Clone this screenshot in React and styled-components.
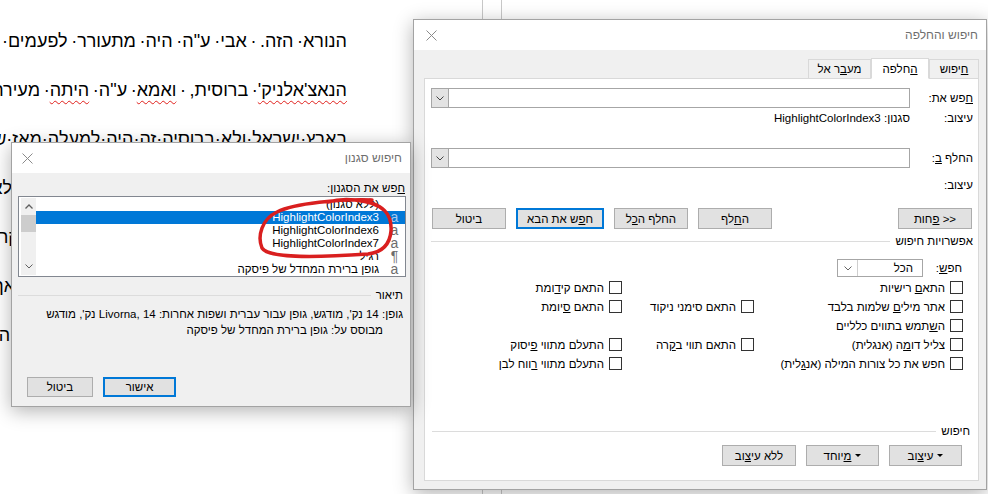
import React from 'react';
import styled, { createGlobalStyle } from 'styled-components';

const GlobalStyle = createGlobalStyle`
  html, body {
    margin: 0;
    padding: 0;
    background: #fff;
  }
  body {
    font-family: "Liberation Sans", "DejaVu Sans", sans-serif;
  }
`;

const Desktop = styled.div`
  position: relative;
  width: 988px;
  height: 494px;
  overflow: hidden;
  background: #fff;
`;

/* document behind the dialogs */
const Page = styled.div`
  display: flex;
  height: 100%;
`;

const DocText = styled.div`
  width: 347px;
  margin-top: -32px;
  direction: rtl;
  overflow: hidden;
  font-family: "Liberation Sans", Arial, sans-serif;
  font-size: 18px;
  line-height: 49px;
  color: #000;
`;

const DocLine = styled.div`
  white-space: nowrap;
`;

const Misspelled = styled.span`
  text-decoration: underline wavy #e0201c;
  text-decoration-thickness: 1px;
  text-underline-offset: 4px;
  text-decoration-skip-ink: none;
`;

const PageEdge = styled.div`
  width: 18px;
  margin-left: 135px;
  border-left: 1px solid #c8c8c8;
  border-right: 1px solid #c8c8c8;
`;

/* windows */
const Window = styled.div`
  position: absolute;
  left: ${p => p.$x}px;
  top: ${p => p.$y}px;
  width: ${p => p.$w}px;
  height: ${p => p.$h}px;
  box-sizing: border-box;
  display: flex;
  flex-direction: column;
  direction: rtl;
  background: #f0f0f0;
  border: 1px solid #a3a3a3;
  box-shadow: 0 4px 18px rgba(0, 0, 0, 0.3);
  font-family: "Liberation Sans", "DejaVu Sans", sans-serif;
  font-size: 11.5px;
  color: #000;
`;

const TitleBar = styled.div`
  height: 30px;
  flex-shrink: 0;
  display: flex;
  align-items: center;
  justify-content: space-between;
  padding: 0 8px 0 ${p => p.$closePad}px;
  background: #fff;
`;

const Title = styled.span`
  font-size: 12px;
  color: #6e6e6e;
`;

const U = styled.u`
  text-decoration: underline;
  text-underline-offset: 1px;
`;

const Button = styled.button`
  box-sizing: border-box;
  width: ${p => p.$w}px;
  height: ${p => p.$h || 21}px;
  padding: 0;
  font: inherit;
  color: #000;
  background: #e1e1e1;
  border: ${p => (p.$primary ? '2px solid #0078d7' : '1px solid #adadad')};
  display: inline-flex;
  align-items: center;
  justify-content: center;
  gap: 4px;
  white-space: nowrap;
`;

const Caret = styled.span`
  width: 0;
  height: 0;
  border-left: 3px solid transparent;
  border-right: 3px solid transparent;
  border-top: 3px solid #000;
`;

const SectionRule = styled.div`
  display: flex;
  align-items: center;
  gap: 5px;
  height: 12px;
  margin-top: ${p => p.$mt || 0}px;
  padding: 0 ${p => p.$pr}px 0 ${p => p.$pl}px;

  &::after {
    content: '';
    flex: 1;
    height: 1px;
    background: #dcdcdc;
  }
`;

/* find & replace dialog */
const FindBody = styled.div`
  flex: 1;
  min-height: 0;
  display: flex;
  flex-direction: column;
  padding: 8px 7px 8px 10px;
`;

const TabStrip = styled.div`
  display: flex;
  align-items: flex-end;
  height: 21px;
  margin-bottom: -1px;
  position: relative;
  z-index: 1;
`;

const Tab = styled.div`
  box-sizing: border-box;
  width: ${p => p.$w}px;
  height: ${p => (p.$active ? 21 : 20)}px;
  display: flex;
  align-items: center;
  justify-content: center;
  background: ${p => (p.$active ? '#fff' : '#f0f0f0')};
  border: 1px solid #d9d9d9;
  border-bottom-color: ${p => (p.$active ? '#fff' : '#d9d9d9')};
`;

const TabPanel = styled.div`
  flex: 1;
  display: flex;
  flex-direction: column;
  background: #fff;
  border: 1px solid #d9d9d9;
`;

const FieldRow = styled.div`
  display: grid;
  grid-template-columns: 63px 1fr;
  align-items: center;
  height: 20px;
  margin-top: ${p => p.$mt || 0}px;
  padding: 0 5px 0 6px;
`;

const Combo = styled.div`
  display: flex;
  box-sizing: border-box;
  width: ${p => (p.$w ? `${p.$w}px` : 'auto')};
  height: ${p => p.$h || 20}px;
  border: 1px solid #a6a6a6;
  background: #fff;
`;

const ComboField = styled.div`
  flex: 1;
  display: flex;
  align-items: center;
  padding-right: ${p => p.$pad || 0}px;
`;

const ComboButton = styled.div`
  width: ${p => p.$w || 16}px;
  display: flex;
  align-items: center;
  justify-content: center;
  background: ${p => (p.$light ? '#fff' : '#e3e3e3')};
  border-right: 1px solid ${p => (p.$light ? '#cfcfcf' : '#a6a6a6')};
`;

const ActionRow = styled.div`
  display: flex;
  justify-content: space-between;
  margin-top: 13px;
  padding: 0 6px 0 7px;
`;

const ButtonGroup = styled.div`
  display: flex;
  gap: 10px;
`;

const ScopeRow = styled.div`
  display: flex;
  align-items: center;
  height: 18px;
  margin-top: 12px;
  padding-right: 16px;
`;

const ScopeLabel = styled.span`
  width: 39px;
`;

const OptionsGrid = styled.div`
  display: grid;
  grid-template-columns: 209px 132px 1fr;
  grid-template-rows: repeat(5, 19px);
  margin-top: 1px;
  padding-right: 15px;
`;

const Option = styled.div`
  grid-row: ${p => p.$row};
  grid-column: ${p => p.$col};
  display: flex;
  align-items: center;
  gap: 5px;
  white-space: nowrap;
`;

const CheckBox = styled.span`
  width: 13px;
  height: 13px;
  flex-shrink: 0;
  box-sizing: border-box;
  border: 1px solid #333;
  background: #fff;
`;

const Footer = styled.div`
  margin-top: auto;
  padding-bottom: 14px;
`;

const FooterButtons = styled.div`
  display: flex;
  gap: 10px;
  margin-top: 8px;
  padding-right: 16px;
`;

/* style search dialog */
const StyleBody = styled.div`
  flex: 1;
  display: flex;
  flex-direction: column;
  padding: 8px 4px 9px 6px;
`;

const FieldLabel = styled.div`
  height: 14px;
  line-height: 14px;
  padding-right: 1px;
`;

const ListBox = styled.div`
  display: flex;
  height: 81px;
  box-sizing: border-box;
  margin-top: 1px;
  padding: 1px 0 1px 2px;
  border: 1px solid #828790;
  background: #fff;
`;

const ItemList = styled.div`
  flex: 1;
  display: flex;
  flex-direction: column;
  overflow: hidden;
`;

const Item = styled.div`
  display: flex;
  align-items: center;
  height: 13px;
  line-height: 13px;
  flex-shrink: 0;
  background: ${p => (p.$selected ? '#0078d7' : 'transparent')};
  color: ${p => (p.$selected ? '#fff' : '#000')};
`;

const ItemGlyph = styled.span`
  width: 21px;
  text-align: center;
  font-size: 14px;
  color: ${p => (p.$selected ? '#a8c8ec' : '#6d6d6d')};
`;

const ItemName = styled.span`
  margin-right: 5px;
  white-space: nowrap;
`;

const ScrollBar = styled.div`
  width: 15px;
  display: flex;
  flex-direction: column;
  background: #f0f0f0;
`;

const ScrollArrow = styled.div`
  height: 17px;
  display: flex;
  align-items: center;
  justify-content: center;
`;

const ScrollThumb = styled.div`
  height: 17px;
  background: #cdcdcd;
`;

const ScrollTrack = styled.div`
  flex: 1;
`;

const Description = styled.div`
  margin-top: 5px;
  padding-right: 3px;
  line-height: 16px;
  white-space: nowrap;
`;

const DescLine = styled.div`
  padding-right: ${p => p.$indent || 0}px;
`;

const DialogButtons = styled.div`
  display: flex;
  justify-content: flex-end;
  gap: 10px;
  margin-top: auto;
  padding-left: 9px;
`;

const Annotation = styled.svg`
  position: absolute;
  left: 250px;
  top: 191px;
  overflow: visible;
  pointer-events: none;
`;

const CloseX = () => (
  <svg width="11" height="11" viewBox="0 0 11 11">
    <path d="M0.5 0.5 L10.5 10.5 M10.5 0.5 L0.5 10.5" stroke="#8a8a8a" strokeWidth="1" fill="none" />
  </svg>
);

const ChevronDown = ({ color = '#444' }) => (
  <svg width="8" height="5" viewBox="0 0 8 5">
    <polyline points="0.5,0.5 4,4 7.5,0.5" stroke={color} strokeWidth="1" fill="none" />
  </svg>
);

const ChevronUp = () => (
  <svg width="8" height="5" viewBox="0 0 8 5">
    <polyline points="0.5,4.5 4,1 7.5,4.5" stroke="#606060" strokeWidth="1.3" fill="none" />
  </svg>
);

// formatting mark for a space, as Word shows it
const S = '·\u2009';

const docLines = [
  ['שנים', 'רבות', 'אחרי', 'המלחמה', 'הגדולה', 'ההיא', 'ועוד'].join(S),
  null,
  null,
  'בארץ·ישראל·ולא·ברוסיה·זה·היה·למעלה·מאז·שנים',
  'ובכל·זאת·הוא·היה·צועק·מתוך·השינה·ואנחנו·לא',
  'ידענו·מה·לעשות·ואיך·להרגיע·אותו·עד·שהבוקר·הגיע·ת',
  'וכשהיה·מתעורר·היה·שותק·ולא·מספר·דבר·לאף·אחד·א',
  'רק·שנים·אחר·כך·הבנתי·מה·עבר·עליו·בימים·ההם·ב',
];

const styleItems = [
  { name: '(ללא סגנון)', glyph: '' },
  { name: 'HighlightColorIndex3', glyph: 'a', selected: true },
  { name: 'HighlightColorIndex6', glyph: 'a' },
  { name: 'HighlightColorIndex7', glyph: 'a' },
  { name: 'רגיל', glyph: '¶' },
  { name: 'גופן ברירת המחדל של פיסקה', glyph: 'a' },
];

const options = [
  { row: 1, col: 1, label: <>התא<U>ם</U> רישיות</> },
  { row: 2, col: 1, label: <>אתר מילי<U>ם</U> שלמות בלבד</> },
  { row: 3, col: 1, label: <>ה<U>ש</U>תמש בתווים כלליים</> },
  { row: 4, col: 1, label: <>צליל דו<U>מ</U>ה (אנגלית)</> },
  { row: 5, col: 1, label: <>חפש את כל צורות המילה (אנ<U>ג</U>לית)</> },
  { row: 2, col: 2, label: <>התאם סימני ניקוד</> },
  { row: 4, col: 2, label: <>התאם תווי ב<U>ק</U>רה</> },
  { row: 1, col: 3, label: <>התאם קי<U>ד</U>ומת</> },
  { row: 2, col: 3, label: <>התאם <U>ס</U>יומת</> },
  { row: 4, col: 3, label: <>התעלם מתווי <U>פ</U>יסוק</> },
  { row: 5, col: 3, label: <>התעלם מתווי <U>ר</U>ווח לבן</> },
];

function FindReplaceDialog() {
  return (
    <Window $x={413} $y={19} $w={574} $h={471}>
      <TitleBar $closePad={12}>
        <Title>חיפוש והחלפה</Title>
        <CloseX />
      </TitleBar>
      <FindBody>
        <TabStrip>
          <Tab $w={50}><span><U>ח</U>יפוש</span></Tab>
          <Tab $w={58} $active><span><U>ה</U>חלפה</span></Tab>
          <Tab $w={63}><span>מע<U>ב</U>ר אל</span></Tab>
        </TabStrip>
        <TabPanel>
          <FieldRow $mt={9}>
            <span><U>ח</U>פש את:</span>
            <Combo>
              <ComboField />
              <ComboButton><ChevronDown /></ComboButton>
            </Combo>
          </FieldRow>
          <FieldRow>
            <span>עיצוב:</span>
            <span>סגנון: HighlightColorIndex3</span>
          </FieldRow>
          <FieldRow $mt={20}>
            <span>החלף <U>ב</U>:</span>
            <Combo>
              <ComboField />
              <ComboButton><ChevronDown /></ComboButton>
            </Combo>
          </FieldRow>
          <FieldRow $mt={7}>
            <span>עיצוב:</span>
            <span />
          </FieldRow>

          <ActionRow>
            <Button $w={74}><span>&lt;&lt; <U>פ</U>חות</span></Button>
            <ButtonGroup>
              <Button $w={74}><span>ה<U>ח</U>לף</span></Button>
              <Button $w={74}><span>החלף ה<U>כ</U>ל</span></Button>
              <Button $w={88} $primary><span>ח<U>פ</U>ש את הבא</span></Button>
              <Button $w={74}><span>ביטול</span></Button>
            </ButtonGroup>
          </ActionRow>

          <SectionRule $mt={6} $pr={5} $pl={6}>אפשרויות חיפוש</SectionRule>

          <ScopeRow>
            <ScopeLabel>חפ<U>ש</U>:</ScopeLabel>
            <Combo $w={86} $h={18}>
              <ComboField $pad={9}>הכל</ComboField>
              <ComboButton $w={19} $light><ChevronDown color="#666" /></ComboButton>
            </Combo>
          </ScopeRow>

          <OptionsGrid>
            {options.map((o, i) => (
              <Option key={i} $row={o.row} $col={o.col}>
                <CheckBox />
                <span>{o.label}</span>
              </Option>
            ))}
          </OptionsGrid>

          <Footer>
            <SectionRule $pr={8} $pl={7}>חיפוש</SectionRule>
            <FooterButtons>
              <Button $w={73}><Caret /><span>עי<U>צ</U>וב</span></Button>
              <Button $w={73}><Caret /><span><U>מ</U>יוחד</span></Button>
              <Button $w={74}><span>ללא עי<U>צ</U>וב</span></Button>
            </FooterButtons>
          </Footer>
        </TabPanel>
      </FindBody>
    </Window>
  );
}

function FindStyleDialog() {
  return (
    <Window $x={11} $y={142} $w={400} $h={265}>
      <TitleBar $closePad={10}>
        <Title>חיפוש סגנון</Title>
        <CloseX />
      </TitleBar>
      <StyleBody>
        <FieldLabel><U>ח</U>פש את הסגנון:</FieldLabel>
        <ListBox>
          <ItemList>
            {styleItems.map(item => (
              <Item key={item.name} $selected={item.selected}>
                <ItemGlyph $selected={item.selected}>{item.glyph}</ItemGlyph>
                <ItemName>{item.name}</ItemName>
              </Item>
            ))}
          </ItemList>
          <ScrollBar>
            <ScrollArrow><ChevronUp /></ScrollArrow>
            <ScrollThumb />
            <ScrollTrack />
            <ScrollArrow><ChevronDown color="#606060" /></ScrollArrow>
          </ScrollBar>
        </ListBox>

        <SectionRule $mt={12} $pr={3} $pl={0}>תיאור</SectionRule>
        <Description>
          <DescLine>גופן: 14 נק', מודגש, גופן עבור עברית ושפות אחרות: Livorna, 14 נק', מודגש</DescLine>
          <DescLine $indent={20}>מבוסס על: גופן ברירת המחדל של פיסקה</DescLine>
        </Description>

        <DialogButtons>
          <Button $w={73} $h={20} $primary><span>אישור</span></Button>
          <Button $w={66} $h={20}><span>ביטול</span></Button>
        </DialogButtons>
      </StyleBody>
    </Window>
  );
}

export default function App() {
  return (
    <Desktop>
      <GlobalStyle />
      <Page>
        <DocText>
          <DocLine>{docLines[0]}</DocLine>
          <DocLine>
            {'הנורא' + S + 'הזה.\u2009' + S + ['אבי', 'ע"ה', 'היה', 'מתעורר', 'לפעמים', 'בלילות'].join(S)}
          </DocLine>
          <DocLine>
            <Misspelled>הנאצ'אלניק'</Misspelled>{S}ברוסית,{'\u2009' + S}<Misspelled>ואמא</Misspelled>{S}ע"ה{S}<Misspelled>היתה</Misspelled>{S}מעירה{S}אותו
          </DocLine>
          {docLines.slice(3).map((line, i) => (
            <DocLine key={i}>{line}</DocLine>
          ))}
        </DocText>
        <PageEdge />
      </Page>

      <FindReplaceDialog />
      <FindStyleDialog />

      <Annotation width="150" height="75" viewBox="0 0 150 75">
        <path
          d="M122 9 C90 8, 45 12, 27 21 C12 28, 7 45, 12 57 C18 67, 60 67, 118 63 C134 61, 140 52, 141 40 C142 24, 135 12, 105 9 C95 8, 85 9, 78 11"
          stroke="#d91f1f"
          strokeWidth="3.5"
          strokeLinecap="round"
          fill="none"
        />
      </Annotation>
    </Desktop>
  );
}
